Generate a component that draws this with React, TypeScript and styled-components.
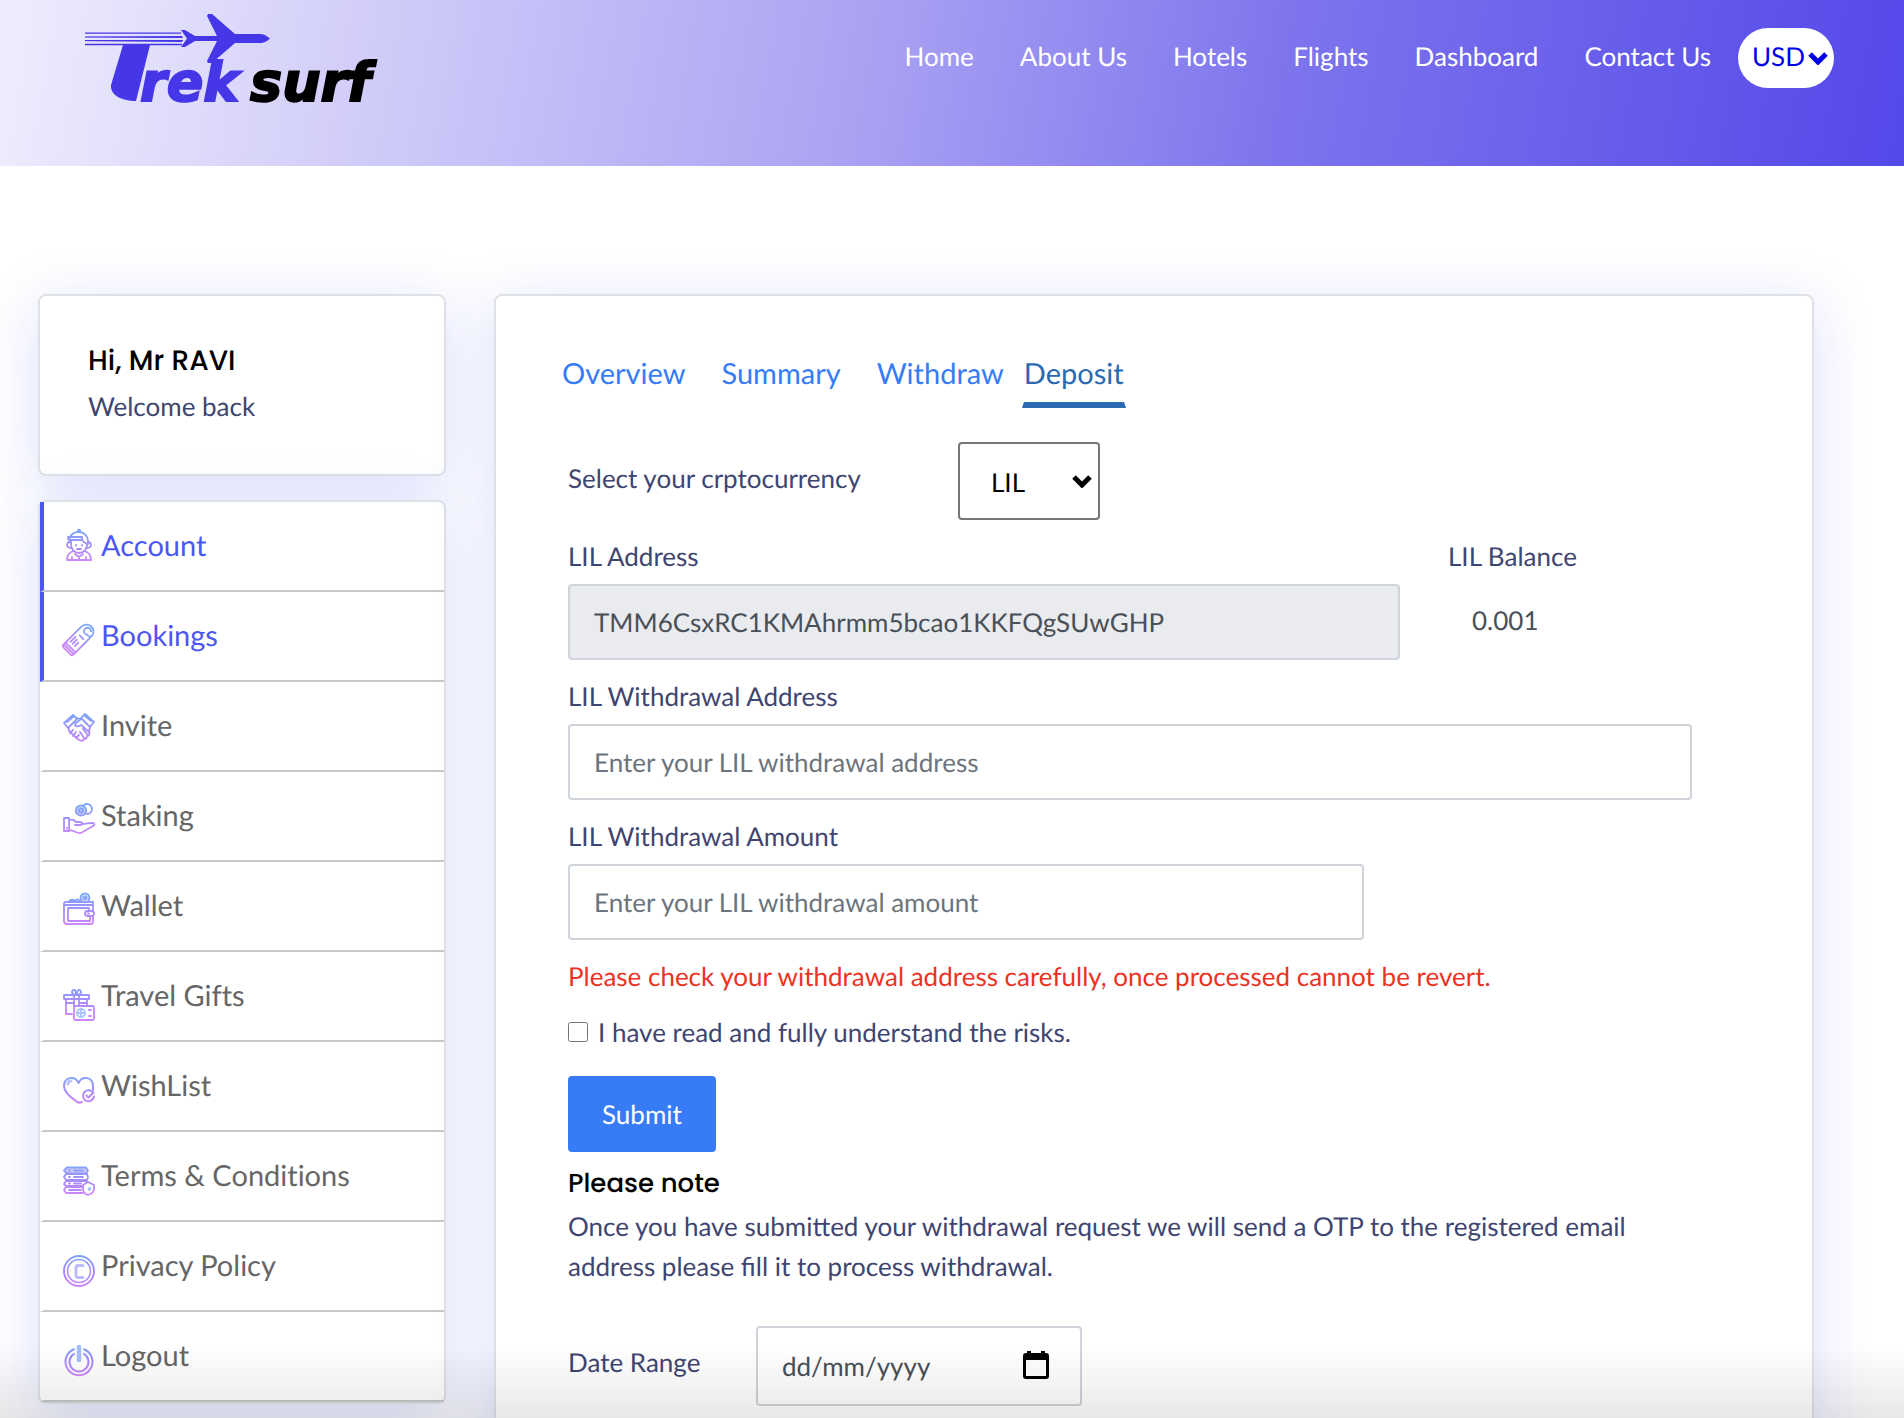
import React from "react";
import styled, { createGlobalStyle, css } from "styled-components";

const GlobalStyle = createGlobalStyle`
  *, *::before, *::after { box-sizing: border-box; }
  body {
    margin: 0;
    background: #fff;
    color: #3f4571;
    font-family: Lato, "Liberation Sans", sans-serif;
    font-size: 26px;
    line-height: 40px;
    text-rendering: geometricPrecision;
  }
  button, input, select { font: inherit; margin: 0; text-rendering: inherit; }
  h1, h2, p, ul { margin: 0; padding: 0; }
`;

const Page = styled.div`
  height: 100vh;
  overflow: hidden;
`;

const Header = styled.header`
  display: flex;
  justify-content: space-between;
  align-items: flex-start;
  height: 166px;
  padding: 14px 70px 0 85px;
  background: linear-gradient(100deg, #efedfd 0%, #aaa3f3 45%, #7c73ed 68%, #5348e9 100%);
`;

const Nav = styled.nav`
  display: flex;
  align-items: center;
  gap: 46px;
  padding-top: 14px;
`;

const NavLink = styled.a`
  color: #fff;
  text-decoration: none;
  white-space: nowrap;
  padding-bottom: 4px;
`;

const SelectBox = styled.div`
  position: relative;
  flex: none;
`;

const Chevron = styled.svg<{ $right: number }>`
  position: absolute;
  right: ${(p) => p.$right}px;
  top: 50%;
  width: 20px;
  height: 14px;
  margin-top: -7px;
  pointer-events: none;
  fill: none;
  stroke: currentColor;
  stroke-width: 5;
`;

const CurrencyBox = styled(SelectBox)`
  color: #0000e8;
  margin-left: -19px;
`;

const CurrencySelect = styled.select`
  appearance: none;
  width: 96px;
  height: 60px;
  padding: 0 0 4px 14px;
  border: 0;
  border-radius: 30px;
  background: #fff;
  color: inherit;
`;

const Main = styled.main`
  display: flex;
  align-items: flex-start;
  gap: 48px;
  padding: 128px 90px 0 38px;
`;

const card = css`
  background: #fff;
  border: 2px solid #dee2e6;
  border-radius: 8px;
  box-shadow: 0 12px 60px rgba(70, 85, 240, 0.19);
`;

const Sidebar = styled.aside`
  display: flex;
  flex-direction: column;
  flex: none;
  gap: 24px;
  width: 408px;
`;

const ProfileCard = styled.section`
  ${card}
  padding: 48px;
`;

const headingFont = css`
  font-family: Poppins, Inter, sans-serif;
  font-feature-settings: "cv11" 1;
  font-weight: 500;
  color: #000;
`;

const Greeting = styled.h1`
  ${headingFont}
  font-size: 28px;
  line-height: 34px;
  margin-bottom: 8px;
`;

const Menu = styled.ul`
  ${card}
  list-style: none;
`;

const MenuLink = styled.a<{ $active?: boolean }>`
  display: flex;
  gap: 6px;
  padding: 24px 20px 24px 19px;
  border-left: 4px solid ${(p) => (p.$active ? "#4c57f3" : "transparent")};
  border-bottom: 2px solid #c8c8c8;
  color: ${(p) => (p.$active ? "#4c57f3" : "#666")};
  font-size: 29px;
  font-variant-ligatures: none;
  text-decoration: none;
`;

const MenuIcon = styled.svg`
  flex: none;
  width: 32px;
  height: 32px;
  margin-top: 7px;
  overflow: visible;
  fill: none;
  stroke: url(#iconTone);
  stroke-width: 2;
  stroke-linejoin: round;
  stroke-linecap: round;
`;

const Panel = styled.section`
  ${card}
  flex: 1;
  min-width: 0;
  padding: 54px 0 60px;
`;

const Tabs = styled.div`
  display: flex;
  padding-left: 48px;
`;

const Tab = styled.button<{ $active?: boolean }>`
  height: 58px;
  padding: 0 ${(p) => (p.$active ? 0 : 18)}px 10px;
  border: 0 solid transparent;
  background: none;
  color: #377cf7;
  font-size: 29px;
  cursor: pointer;
  ${(p) =>
    p.$active &&
    css`
      padding-bottom: 4px;
      border-width: 0 2px 6px;
      border-bottom-color: #2b69b0;
      color: #2b69b0;
    `}
`;

const Form = styled.form`
  display: flex;
  flex-direction: column;
  align-items: flex-start;
  gap: 16px;
  padding: 34px 120px 0 72px;
`;

const InlineField = styled.div<{ $label: number }>`
  display: grid;
  grid-template-columns: ${(p) => p.$label}px auto;
  align-items: start;
`;

const InlineLabel = styled.label`
  padding-top: 16px;
`;

const CoinSelect = styled.select`
  appearance: none;
  display: block;
  width: 142px;
  height: 78px;
  padding: 2px 0 0 31px;
  border: 2px solid #767676;
  border-radius: 4px;
  background: #fff;
  color: #000;
`;

const CoinBox = styled(SelectBox)`
  color: #000;
`;

const AddressRow = styled.div`
  display: grid;
  grid-template-columns: 832fr 244fr;
  gap: 48px;
  width: 100%;
`;

const Field = styled.div<{ $max?: number }>`
  display: flex;
  flex-direction: column;
  gap: 8px;
  width: 100%;
  max-width: ${(p) => (p.$max ? `${p.$max}px` : "none")};
`;

const TextInput = styled.input`
  width: 100%;
  height: 76px;
  padding: 0 24px;
  border: 2px solid #ced4da;
  border-radius: 4px;
  background: #fff;
  color: #495057;
  &::placeholder { color: #6c757d; opacity: 1; }
  &:disabled { background: #e9ebef; }
`;

const Balance = styled.div`
  display: flex;
  flex-direction: column;
  gap: 24px;
`;

const BalanceValue = styled.output`
  padding-left: 24px;
  color: #495057;
`;

const Warning = styled.p`
  color: #ec3323;
`;

const Consent = styled.label`
  display: flex;
  align-items: center;
  gap: 10px;
`;

const Checkbox = styled.input`
  width: 20px;
  height: 20px;
`;

const SubmitButton = styled.button`
  height: 76px;
  margin-top: 8px;
  padding: 0 34px;
  border: 0;
  border-radius: 4px;
  background: #377cf6;
  color: #fff;
  cursor: pointer;
`;

const Note = styled.section`
  padding-bottom: 24px;
`;

const NoteTitle = styled.h2`
  ${headingFont}
  font-size: 26px;
  line-height: 32px;
  margin-bottom: 6px;
`;

const DateBox = styled.div`
  position: relative;
  width: 326px;
`;

const DateInput = styled(TextInput)`
  display: block;
  height: 80px;
  &::placeholder { color: #495057; }
`;

const CalendarButton = styled.button`
  position: absolute;
  right: 30px;
  top: 22px;
  width: 32px;
  height: 32px;
  padding: 0;
  border: 0;
  background: none;
  color: #000;
  svg { display: block; }
`;

const BottomFade = styled.div`
  position: fixed;
  inset: auto 0 0;
  height: 72px;
  background: linear-gradient(rgba(0, 0, 0, 0), rgba(0, 0, 0, 0.09));
  pointer-events: none;
`;

const LogoText = styled.text`
  font-family: "DejaVu Sans", sans-serif;
  font-size: 54px;
  font-weight: 700;
  font-style: italic;
  stroke-width: 2;
`;

const Logo = () => (
  <svg width="330" height="110" viewBox="0 0 330 110" role="img" aria-label="Treksurf">
    <defs>
      <linearGradient id="trail">
        <stop offset="0" stopColor="#4537e8" stopOpacity="0.15" />
        <stop offset="1" stopColor="#4537e8" />
      </linearGradient>
    </defs>
    <g fill="#4537e8">
      <path fill="url(#trail)" d="M0 22h97v2H0zM0 26h97v2H0z" />
      <path d="M0 18.5h96v1.2H0zM0 22.6h98v1H0zM0 26h98v1H0zM0 29.8h97v1.4H0z" />
      <path d="M38 31H65L51 87C38 87 25 82 26 71Z" />
      <path d="M96 16h4l10 6h22L122 2l1-2h4l23 20h25c5 0 8 3 10 4.500-2 2-5 4.500-10 4.500h-25l-23 20h-4l-1-2 10-20h-22l-10 6h-4l6-8.500Z" />
      <LogoText x="55" y="87" stroke="#4537e8">rek</LogoText>
    </g>
    <LogoText x="165" y="87" stroke="#000">surf</LogoText>
  </svg>
);

const icons: Record<string, React.ReactNode> = {
  Account: (
    <g transform="translate(0 -4)" strokeWidth="1.800">
      <circle cx="16" cy="1.800" r="1.200" />
      <path d="M7 9C8 5 11 3 16 3s9 4 9 9v3M5 8h14v3H7c-2 0-2-1-2-3zM8 11v4c0 5 3 9 8 9s8-4 8-9c-3-1-4-3-5-4" />
      <path d="M7 13c-4 0-4 6 1 6M25 13c4 0 4 6-1 6M13 16v.5M19 16v.5M14 20h4" />
      <path d="M11 22c-4 1-7 3-7 9h24c0-6-3-8-7-9M12 25l4 3 4-3M16 28v2M9 28v2M23 28v2" />
    </g>
  ),
  Bookings: (
    <g transform="rotate(45 16 16)" strokeWidth="1.800">
      <path d="M23 5v26c0 1.500-.5 2-2 2H11c-1.500 0-2-.5-2-2V6a7 7 0 1 1 14-1M19 7a3.500 3.500 0 1 1 0-5M23 5c0 2-4 3-4 2" />
      <path d="M9 28h14M10 30.500h12M12 24v-7M15 24v-6M18 24v-5M14 13h5" />
    </g>
  ),
  Invite: (
    <g strokeWidth="1.800">
      <path d="M1 10l9-8 4 4-9 9zM31 9l-9-8-4 4 9 9zM4 9l6-5M28 8l-6-5M14 5l4 1M6 14c-1 3 0 4 2 6l8 7c2 1 4 1 5-1 2 0 3-1 3-3 2 0 3-2 2-4l1-5M18 6l-6 5c0 3 3 3 6 1l8 7M10 17l-3 3M13 19l-3 4M16 22l-3 3M17 19l4 6M20 16l4 5" />
    </g>
  ),
  Staking: (
    <g strokeWidth="1.800">
      <circle cx="18" cy="7.500" r="5.200" fill="#b9d4ff" />
      <circle cx="18" cy="7.500" r="2" />
      <path d="M21 2a5 5 0 1 1 3 9M1 15h5v13H1zM6 17c4-1 5 0 7 2h4c3 0 2 3 0 3h-5M19 21c4 0 7-1 10-1 3 0 3 2 1 3l-12 7c-4 1-7-3-12-3M4 25v.5" />
    </g>
  ),
  Wallet: (
    <g strokeWidth="1.800">
      <circle cx="22" cy="4.800" r="4.500" fill="#c9dcff" />
      <circle cx="22" cy="4.800" r="1.500" />
      <path d="M30 18V9H3c-3 0-2 3-2 4v15c0 2 1 3 3 3h24c1 0 2-1 2-3v-5M2 12h28M6 9c1-3 5-3 7 0M12 8c1-2 3-2 5 0M5 15h21v3M5 15v13h22v-5" />
      <rect x="22" y="18" width="9" height="5" rx="2.500" />
      <path d="M25 20.500h1" />
    </g>
  ),
  "Travel Gifts": (
    <g strokeWidth="1.800">
      <path d="M13 12c-5 0-5-5-2-5 2 0 2 3 2 5zM14 12c5 0 5-5 2-5-2 0-2 3-2 5zM1 12h25v4H1zM3 17v14h6M24 17v5M11 12v11M16 12v10M3 20h8M16 20h8" />
      <rect x="11" y="23" width="20" height="14" rx="1.500" />
      <circle cx="18" cy="30" r="4" stroke="#a9c4ff" />
      <path stroke="#a9c4ff" d="M14 30h8M18 26v8" />
      <path d="M26 27h2M26 33h2" />
    </g>
  ),
  WishList: (
    <g>
      <path d="M19 29c-2 1-4 1-6-1C7 24 1 19 1 13 1 4 12 2 15.500 10 19 2 30 4 30 13v4" />
      <path d="M29 18.500a5.500 5.500 0 1 0 2 5M23.500 22.500l2 2 5-5" />
      <path d="M5 11c0-2 1-3 3-3" strokeWidth="3" opacity="0.600" />
    </g>
  ),
  "Terms & Conditions": (
    <g strokeWidth="1.800">
      <path fill="#d5c9ff" d="M4 4.500h19l2 3-2 3H4l-3-3z" />
      <path fill="#fff" d="M3 11h21l1 3-1 3H3l-2-3z" />
      <path fill="#fff" d="M3 18h20l2 2-2 3H3l-2-2z" />
      <path d="M20 24H3l-2 3 2 3h17M6 7.500h1M11 7.500h9M6 14h1M11 14h9M6 20.500h1M11 20.500h7M6 27h12" />
      <path fill="#fff" d="M25 19l6 3v4c0 3-3 5-6 6-3-1-5-3-5-6v-4z" />
      <circle cx="26.500" cy="26" r="1" stroke="#a9c4ff" />
    </g>
  ),
  "Privacy Policy": (
    <g>
      <circle cx="16" cy="18" r="15" />
      <circle cx="16" cy="18" r="11.500" strokeWidth="1.500" />
      <path d="M20 12.500h-5c-1 0-2 .5-2 2v8c0 1 1 2 2 2h5" strokeWidth="3" stroke="#bcbcff" />
    </g>
  ),
  Logout: (
    <g>
      <path d="M11 6.200a13.500 13.500 0 1 0 10 0" />
      <path d="M11 10.800a9.500 9.500 0 1 0 10 0" />
      <path d="M16 4v13" strokeWidth="4.500" stroke="#a3bfff" />
    </g>
  ),
};

const menuItems = Object.keys(icons);
const activeItems = ["Account", "Bookings"];
const navItems = ["Home", "About Us", "Hotels", "Flights", "Dashboard", "Contact Us"];
const tabs = ["Overview", "Summary", "Withdraw", "Deposit"];

const Arrow = ({ right }: { right: number }) => (
  <Chevron $right={right} viewBox="0 0 20 14" aria-hidden="true">
    <path d="M2 3l8 8 8-8" />
  </Chevron>
);

const IconDefs = styled.svg`
  position: absolute;
  width: 0;
  height: 0;
`;

export default function App() {
  return (
    <Page>
      <GlobalStyle />
      <IconDefs aria-hidden="true">
        <defs>
          <linearGradient id="iconTone" gradientUnits="userSpaceOnUse" x1="0" y1="2" x2="0" y2="32">
            <stop offset="0" stopColor="#7da6fb" />
            <stop offset="0.500" stopColor="#a48dfb" />
            <stop offset="1" stopColor="#cf86fb" />
          </linearGradient>
        </defs>
      </IconDefs>
      <Header>
        <Logo />
        <Nav>
          {navItems.map((item) => (
            <NavLink key={item} href="#">{item}</NavLink>
          ))}
          <CurrencyBox>
            <CurrencySelect aria-label="Currency">
              <option>USD</option>
            </CurrencySelect>
            <Arrow right={6} />
          </CurrencyBox>
        </Nav>
      </Header>
      <Main>
        <Sidebar>
          <ProfileCard>
            <Greeting>Hi, Mr RAVI</Greeting>
            <p>Welcome back</p>
          </ProfileCard>
          <Menu>
            {menuItems.map((item) => (
              <li key={item}>
                <MenuLink href="#" $active={activeItems.includes(item)}>
                  <MenuIcon viewBox="0 0 32 32" aria-hidden="true">{icons[item]}</MenuIcon>
                  {item}
                </MenuLink>
              </li>
            ))}
          </Menu>
        </Sidebar>
        <Panel>
          <Tabs>
            {tabs.map((tab) => (
              <Tab key={tab} type="button" $active={tab === "Deposit"}>{tab}</Tab>
            ))}
          </Tabs>
          <Form onSubmit={(e) => e.preventDefault()}>
            <InlineField $label={390}>
              <InlineLabel htmlFor="coin">Select your crptocurrency</InlineLabel>
              <CoinBox>
                <CoinSelect id="coin">
                  <option>LIL</option>
                </CoinSelect>
                <Arrow right={8} />
              </CoinBox>
            </InlineField>
            <AddressRow>
              <Field>
                <label htmlFor="address">LIL Address</label>
                <TextInput id="address" disabled defaultValue="TMM6CsxRC1KMAhrmm5bcao1KKFQgSUwGHP" />
              </Field>
              <Balance>
                <label htmlFor="balance">LIL Balance</label>
                <BalanceValue id="balance">0.001</BalanceValue>
              </Balance>
            </AddressRow>
            <Field>
              <label htmlFor="target">LIL Withdrawal Address</label>
              <TextInput id="target" placeholder="Enter your LIL withdrawal address" />
            </Field>
            <Field $max={796}>
              <label htmlFor="amount">LIL Withdrawal Amount</label>
              <TextInput id="amount" placeholder="Enter your LIL withdrawal amount" />
            </Field>
            <Warning>Please check your withdrawal address carefully, once processed cannot be revert.</Warning>
            <Consent>
              <Checkbox type="checkbox" />
              I have read and fully understand the risks.
            </Consent>
            <SubmitButton type="submit">Submit</SubmitButton>
            <Note>
              <NoteTitle>Please note</NoteTitle>
              <p>
                Once you have submitted your withdrawal request we will send a OTP to the registered email
                address please fill it to process withdrawal.
              </p>
            </Note>
            <InlineField $label={188}>
              <InlineLabel htmlFor="from">Date Range</InlineLabel>
              <DateBox>
                <DateInput id="from" placeholder="dd/mm/yyyy" />
                <CalendarButton type="button" aria-label="Open calendar">
                  <svg width="32" height="32" viewBox="0 0 32 32" fill="currentColor">
                    <path
                      fillRule="evenodd"
                      d="M7 3h4v2h10V3h4v2h1c2 0 3 1 3 3v20c0 2-1 3-3 3H6c-2 0-3-1-3-3V8c0-2 1-3 3-3h1zM6 12v16h20V12z"
                    />
                  </svg>
                </CalendarButton>
              </DateBox>
            </InlineField>
          </Form>
        </Panel>
      </Main>
      <BottomFade />
    </Page>
  );
}
